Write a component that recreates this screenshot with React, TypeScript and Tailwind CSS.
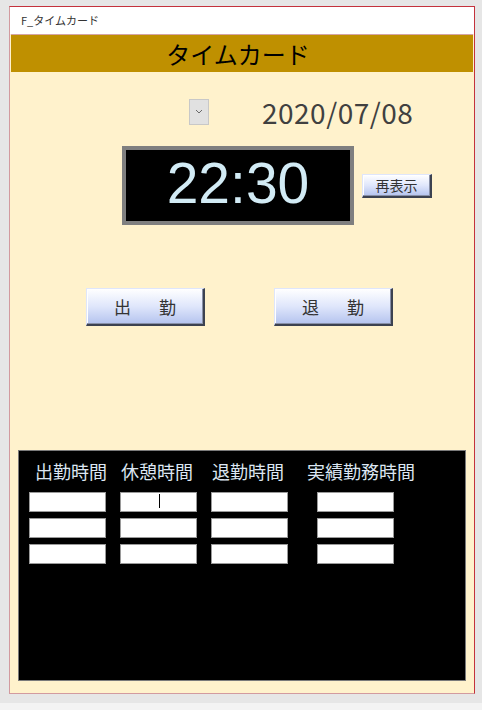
import React from "react";

const JP = '"Noto Sans CJK JP", "Noto Sans", sans-serif';

function BevelButton({ children, className }: { children: React.ReactNode; className: string }) {
  return (
    <div
      className={
        "flex items-center justify-center border border-r-2 border-b-2 border-t-[#dfe6fb] border-l-[#dfe6fb] border-r-[#3c4250] border-b-[#3c4250] bg-gradient-to-b from-[#ffffff] via-[#dfe6fb] to-[#b4c3ee] shadow-[inset_-1px_-1px_0_#8890a8,inset_1px_1px_0_#ffffff] text-[#333333] " +
        className
      }
    >
      {children}
    </div>
  );
}

function Box({ cursor }: { cursor?: boolean }) {
  return (
    <div className="relative h-[20px] w-[77px] border border-[#9a9a9a] bg-white">
      {cursor && <div className="absolute left-[38px] top-[1px] h-[14px] w-px bg-black" />}
    </div>
  );
}

export default function App() {
  return (
    <div className="h-[710px] w-[482px] bg-[#e6e6e6] pt-[6px] pl-[9px]" style={{ fontFamily: JP }}>
      <div className="flex h-[688px] w-[466px] flex-col border border-t-[#c4323c] border-r-[#c4323c] border-l-[#d29a9f] border-b-[#d29a9f] bg-[#fff2cc]">
        {/* title bar */}
        <div className="flex h-[27px] items-center bg-white pl-[11px] text-[11px] text-[#333333]">
          F_タイムカード
        </div>
        {/* header */}
        <div className="mx-px flex h-[38px] items-center justify-center border-t border-[#d4a4a4] bg-[#bf9000] pr-[8px] text-[24px] text-black">
          タイムカード
        </div>
        {/* date row */}
        <div className="mt-[26px] flex h-[27px] items-center">
          <div className="ml-[179px] flex h-[26px] w-[20px] items-center justify-center border border-[#c8c8c8] bg-[#e1e1e1]">
            <svg width="8" height="5" viewBox="0 0 8 5">
              <path d="M1 1 L4 4 L7 1" fill="none" stroke="#6a6a6a" strokeWidth="1" />
            </svg>
          </div>
          <div className="ml-[53px] text-[28px] leading-none tracking-[0.5px] text-[#404040]">2020/07/08</div>
        </div>
        {/* clock row */}
        <div className="mt-[21px] flex items-center">
          <div className="ml-[112px] flex h-[79px] w-[232px] items-center justify-center border-4 border-[#7f7f7f] bg-black pb-[4px]">
            <span
              className="text-[57px] leading-none text-[#d2ebf5]"
              style={{ fontFamily: '"Liberation Sans", Arial, sans-serif' }}
            >
              22:30
            </span>
          </div>
          <BevelButton className="ml-[8px] h-[24px] w-[70px] text-[14px] leading-none">再表示</BevelButton>
        </div>
        {/* action buttons */}
        <div className="mt-[63px] flex">
          <BevelButton className="ml-[76px] h-[38px] w-[119px] text-[17px]">
            <span>出</span>
            <span className="ml-[28px]">勤</span>
          </BevelButton>
          <BevelButton className="ml-[69px] h-[38px] w-[119px] text-[17px]">
            <span>退</span>
            <span className="ml-[28px]">勤</span>
          </BevelButton>
        </div>
        {/* black panel */}
        <div className="ml-[8px] mt-[124px] h-[231px] w-[448px] border border-[#7a7a7a] bg-black">
          <div className="flex pt-[8px] text-[18px] leading-[24px] text-[#dce6f2]">
            <span className="ml-[16px]">出勤時間</span>
            <span className="ml-[14px]">休憩時間</span>
            <span className="ml-[19px]">退勤時間</span>
            <span className="ml-[23px]">実績勤務時間</span>
          </div>
          <div className="mt-[9px] flex flex-col gap-[6px]">
            {[0, 1, 2].map((r) => (
              <div key={r} className="flex pl-[10px]">
                <Box />
                <div className="ml-[14px]">
                  <Box cursor={r === 0} />
                </div>
                <div className="ml-[14px]">
                  <Box />
                </div>
                <div className="ml-[29px]">
                  <Box />
                </div>
              </div>
            ))}
          </div>
        </div>
      </div>
      <div className="-ml-[9px] mt-[9px] h-[7px] w-[482px] bg-[#f3f3f3]" />
    </div>
  );
}
